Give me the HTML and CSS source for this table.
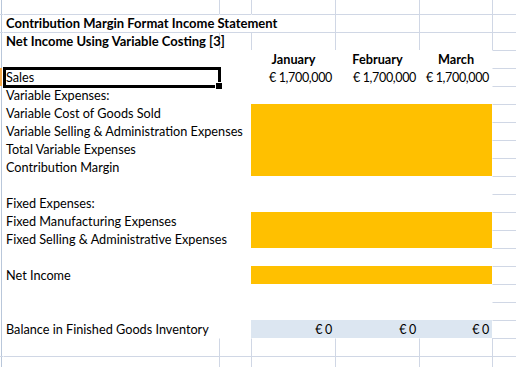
FILE: index.html
```html
<!DOCTYPE html>
<html lang="en">
<head>
<meta charset="utf-8">
<title>Contribution Margin Format Income Statement</title>
<link rel="stylesheet" href="styles.css">
</head>
<body>
<div class="sheet">
  <table class="grid">
    <colgroup>
      <col class="c-h"><col class="c-a"><col class="c-b"><col class="c-c"><col class="c-d"><col class="c-e"><col class="c-f">
    </colgroup>
    <tbody>
      <tr class="r-top"><td class="h"></td><td></td><td class="l"></td><td class="l"></td><td class="l"></td><td class="l"></td><td class="l"></td></tr>
      <tr><td class="h t"></td><td class="t title">Contribution Margin Format Income Statement</td><td class="t"></td><td class="t"></td><td class="t l"></td><td class="t l"></td><td class="t l"></td></tr>
      <tr><td class="h t"></td><td class="t title">Net Income Using Variable Costing [3]</td><td class="t l"></td><td class="t l"></td><td class="t l"></td><td class="t l"></td><td class="t l"></td></tr>
      <tr><td class="h"></td><td></td><td></td><td class="month">January</td><td class="month">February</td><td class="month">March</td><td class="t"></td></tr>
      <tr><td class="h sel"></td><td class="label">Sales</td><td></td><td class="num">€ 1,700,000</td><td class="num">€ 1,700,000</td><td class="num">€ 1,700,000</td><td class="t"></td></tr>
      <tr><td class="h"></td><td class="label">Variable Expenses:</td><td></td><td></td><td></td><td></td><td class="t"></td></tr>
      <tr><td class="h"></td><td class="label">Variable Cost of Goods Sold</td><td></td><td class="fill-y"></td><td class="fill-y"></td><td class="fill-y"></td><td class="t"></td></tr>
      <tr><td class="h"></td><td class="label">Variable Selling &amp; Administration Expenses</td><td></td><td class="fill-y"></td><td class="fill-y"></td><td class="fill-y"></td><td class="t"></td></tr>
      <tr><td class="h"></td><td class="label">Total Variable Expenses</td><td></td><td class="fill-y"></td><td class="fill-y"></td><td class="fill-y"></td><td class="t"></td></tr>
      <tr><td class="h"></td><td class="label">Contribution Margin</td><td></td><td class="fill-y"></td><td class="fill-y"></td><td class="fill-y"></td><td class="t"></td></tr>
      <tr><td class="h"></td><td></td><td></td><td></td><td></td><td></td><td class="t"></td></tr>
      <tr><td class="h"></td><td class="label">Fixed Expenses:</td><td></td><td></td><td></td><td></td><td class="t"></td></tr>
      <tr><td class="h"></td><td class="label">Fixed Manufacturing Expenses</td><td></td><td class="fill-y"></td><td class="fill-y"></td><td class="fill-y"></td><td class="t"></td></tr>
      <tr><td class="h"></td><td class="label">Fixed Selling &amp; Administrative Expenses</td><td></td><td class="fill-y"></td><td class="fill-y"></td><td class="fill-y"></td><td class="t"></td></tr>
      <tr><td class="h"></td><td></td><td></td><td></td><td></td><td></td><td class="t"></td></tr>
      <tr><td class="h"></td><td class="label">Net Income</td><td></td><td class="fill-y"></td><td class="fill-y"></td><td class="fill-y"></td><td class="t"></td></tr>
      <tr><td class="h"></td><td></td><td></td><td></td><td></td><td></td><td class="t"></td></tr>
      <tr><td class="h"></td><td></td><td></td><td></td><td></td><td></td><td class="t"></td></tr>
      <tr><td class="h"></td><td class="label">Balance in Finished Goods Inventory</td><td></td><td class="num fill-b">€ 0</td><td class="num fill-b">€ 0</td><td class="num fill-b">€ 0</td><td class="t"></td></tr>
      <tr><td class="h"></td><td></td><td class="l"></td><td class="l"></td><td class="l"></td><td class="l"></td><td class="t l"></td></tr>
      <tr><td class="h t"></td><td class="t"></td><td class="t l"></td><td class="t l"></td><td class="t l"></td><td class="t l"></td><td class="t l"></td></tr>
    </tbody>
  </table>
  <div class="selection"><span class="handle"></span></div>
</div>
</body>
</html>
```

FILE: styles.css
```css
:root {
  --grid: #d0d7e5;
  --header-line: #b9c7da;
}

html,
body {
  margin: 0;
  background: #ffffff;
}

body {
  font-family: Lato, "Liberation Sans", sans-serif;
  font-size: 13px;
  color: #000000;
  overflow: hidden;
}

.sheet {
  position: relative;
  width: 516px;
  height: 367px;
  overflow: hidden;
}

.grid {
  border-collapse: separate;
  border-spacing: 0;
  table-layout: fixed;
  width: 516px;
}

.c-h { width: 3px; }
.c-a { width: 216px; }
.c-b { width: 32px; }
.c-c { width: 84px; }
.c-d { width: 84px; }
.c-e { width: 73px; }
.c-f { width: 24px; }

.grid td {
  padding: 0;
  height: 17px;
  line-height: 17px;
  border-top: 1px solid transparent;
  border-left: 1px solid transparent;
  vertical-align: bottom;
  white-space: nowrap;
  overflow: visible;
}

.grid tr.r-top td {
  border-top-width: 0;
  height: 14px;
}

.grid td.t { border-top-color: var(--grid); }
.grid td.l { border-left-color: var(--grid); }

.grid td.h {
  border-left-width: 0;
  background: linear-gradient(to right, transparent 1px, var(--header-line) 1px, var(--header-line) 2px, transparent 2px);
}

.grid td.h.sel {
  background: linear-gradient(to right, #f3a84c 0, #f3a84c 2px, transparent 2px);
}

.grid td.title {
  font-weight: bold;
  padding-left: 2px;
}

.grid td.label {
  font-size: 12.7px;
  padding-left: 2px;
}

.grid td.month {
  font-weight: bold;
  font-size: 12.7px;
  text-align: center;
}

.grid td.num {
  font-size: 12.5px;
  letter-spacing: -0.35px;
  text-align: right;
  padding-right: 3px;
}

.grid td.fill-y { background: #ffc000; }
.grid td.fill-b { background: #dce6f1; }

.selection {
  position: absolute;
  left: 3px;
  top: 67px;
  width: 218px;
  height: 21px;
  box-sizing: border-box;
  border: 3px solid #000000;
}

.handle {
  position: absolute;
  right: -5px;
  bottom: -5px;
  width: 6px;
  height: 6px;
  background: #000000;
  border: 1px solid #ffffff;
}
```
